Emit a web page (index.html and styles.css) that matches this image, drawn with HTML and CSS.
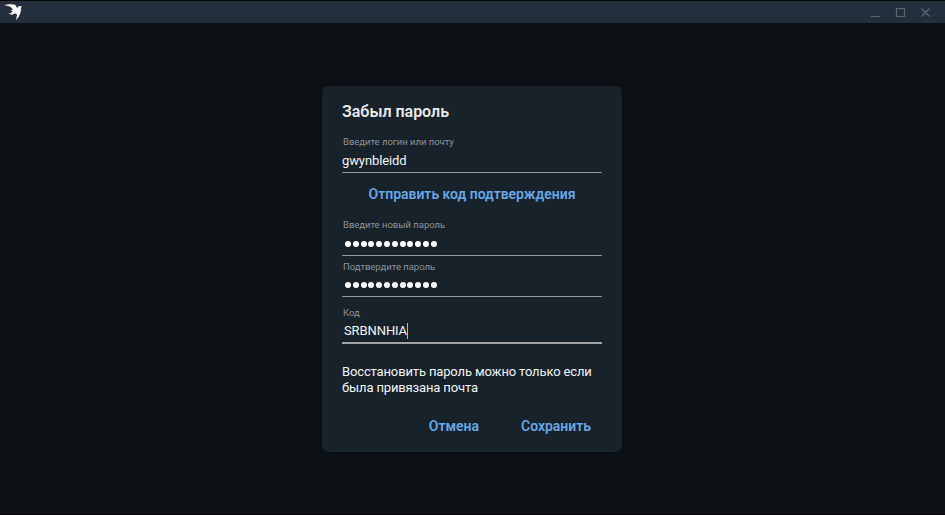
FILE: index.html
```html
<!DOCTYPE html>
<html lang="ru">
<head>
<meta charset="utf-8">
<title>Забыл пароль</title>
<link rel="stylesheet" href="styles.css">
</head>
<body>
<header class="titlebar">
  <svg class="logo" width="20" height="20" viewBox="0 0 20 20"><path d="M0 3C4 2 9 2 11.600 3L13.200 6.300C14 4.600 15.300 3.800 16.500 4.200L18.300 4.600 16.900 5.800C17.300 10 16 14 12.100 18.200L13 12.600 11 11.300 8.800 12.400 6.200 13 7.300 11.800 4 11.600 7.200 10.700 8.900 8.900 6.200 8.300 9 7.400C7.300 5 4.500 3.700 0 3z"/></svg>
  <svg class="controls" width="62" height="12" viewBox="0 0 62 12"><path d="M0 9.500h9M25.500 1.500h8v8h-8zM50.500 1.500l8 8M58.500 1.500l-8 8"/></svg>
</header>
<main class="workspace">
  <form class="card">
    <h1 class="title"><span>Забыл пароль</span></h1>
    <div class="field login"><label><span>Введите логин или почту</span></label><div class="value"><span>gwynbleidd</span></div></div>
    <div class="send"><span>Отправить код подтверждения</span></div>
    <div class="field new-password"><label><span>Введите новый пароль</span></label><div class="dots"><i></i><i></i><i></i><i></i><i></i><i></i><i></i><i></i><i></i><i></i><i></i><i></i></div></div>
    <div class="field confirm"><label><span>Подтвердите пароль</span></label><div class="dots"><i></i><i></i><i></i><i></i><i></i><i></i><i></i><i></i><i></i><i></i><i></i><i></i></div></div>
    <div class="field code"><label><span>Код</span></label><div class="value"><span>SRBNNHIA</span><b class="caret"></b></div></div>
    <p class="note">Восстановить пароль можно только если<br>была привязана почта</p>
    <div class="actions"><span>Отмена</span><span>Сохранить</span></div>
  </form>
</main>
</body>
</html>
```
FILE: styles.css
```css
* { box-sizing: border-box; }
body {
  margin: 0;
  height: 515px;
  overflow: hidden;
  background: #0b1115;
  color: #f2f4f5;
  font: 13px/16px Roboto, sans-serif;
  border-top: 1px solid #030406;
  border-bottom: 1px solid #050508;
}
.titlebar {
  height: 22px;
  background: #242f3d;
  display: flex;
  justify-content: space-between;
  padding: 1px 12px 0 4px;
}
.logo { fill: #fff; }
.controls { margin-top: 5px; fill: none; stroke: #596672; stroke-width: 1.2; }
.workspace { display: flex; justify-content: center; padding: 63px 1px 0 0; }
.card {
  width: 300px;
  height: 366px;
  padding: 16px 20px 0;
  border-radius: 6px;
  background: #18222b;
  box-shadow: 0 0 5px #0a0e12;
}
.title { margin: 0; height: 33px; font-size: 16px; line-height: 20px; font-weight: 600; letter-spacing: -.02px; color: #e8e8e8; }
.field { border-bottom: 1px solid #92979b; }
.login { height: 38px; }
label { display: block; height: 14px; padding-left: 1px; font-size: 9.500px; line-height: 14px; letter-spacing: -.03px; color: #8d9398; }
.value { display: flex; height: 16px; margin-top: 4px; letter-spacing: -.1px; }
.send { height: 45px; padding-top: 13px; text-align: center; font-size: 14px; font-weight: 600; line-height: 16px; letter-spacing: -.02px; color: #64a8e8; }
.new-password { height: 38px; }
.dots { display: flex; gap: 1.800px; padding: 9px 0 0 3px; }
.dots i { width: 6px; height: 6px; border-radius: 50%; background: #fff; }
.confirm { height: 41px; padding-top: 4px; }
.confirm .dots { padding-top: 8px; }
.code { height: 47px; padding-top: 9px; border-bottom: 2px solid #a3a3a3; }
.code .value { margin-top: 3px; padding-left: 2px; }
.caret { width: 1px; height: 16px; background: #b4b8bb; }
.note { margin: 20px 0 0; height: 54px; white-space: nowrap; letter-spacing: -.14px; }
.actions { display: flex; justify-content: flex-end; gap: 42px; padding-right: 11px; font-size: 14px; font-weight: 600; letter-spacing: -.02px; color: #64a8e8; }
```
